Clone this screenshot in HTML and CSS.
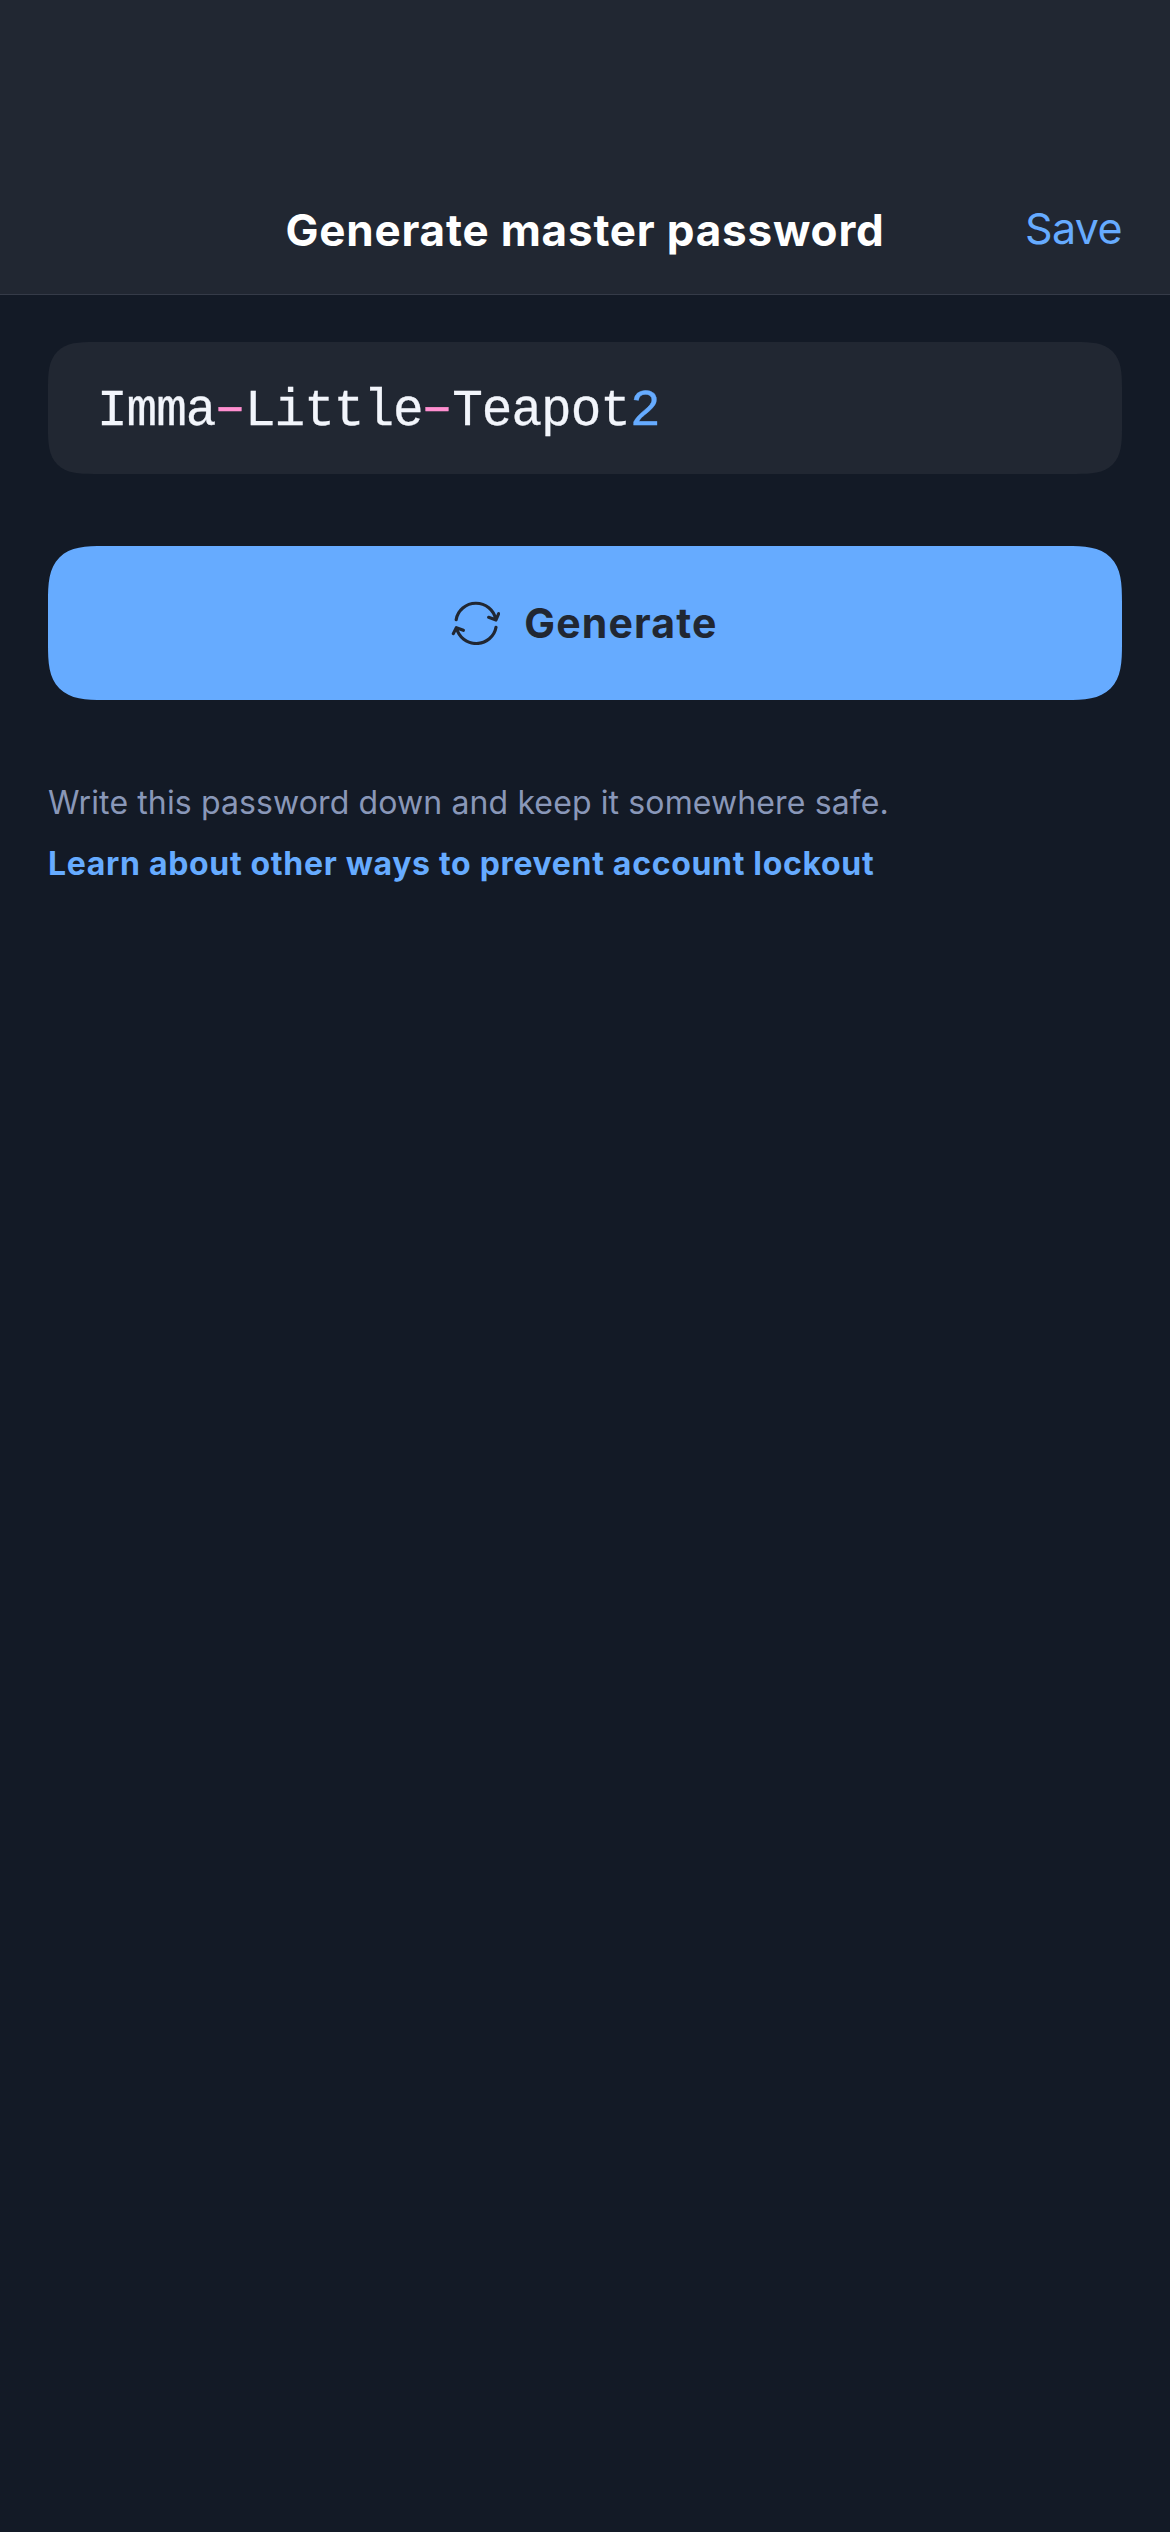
FILE: index.html
```html
<!DOCTYPE html>
<html lang="en">
<head>
<meta charset="utf-8">
<title>Generate master password</title>
<link rel="stylesheet" href="styles.css">
</head>
<body>
<header class="navbar">
  <h1 class="title">Generate master password</h1>
  <a class="save">Save</a>
</header>
<main class="content">
  <div class="field">Imma<span class="symbol">-</span>Little<span class="symbol">-</span>Teapot<span class="digit">2</span></div>
  <button class="generate">
    <svg class="icon" viewBox="0 0 150 132" fill="none" stroke="currentColor" stroke-width="9.5" stroke-linecap="round" stroke-linejoin="round">
      <path d="M18.500 56A60 58 0 0 1 137 55M146 38L138 57L116 49M10 98L19 80L40 88M20 81A60 58 0 0 0 138 79"/>
    </svg>
    <span>Generate</span>
  </button>
  <p class="hint">Write this password down and keep it somewhere safe.</p>
  <a class="learn">Learn about other ways to prevent account lockout</a>
</main>
</body>
</html>
```
FILE: styles.css
```css
* { box-sizing: border-box; }
body { margin: 0; min-height: 2532px; background: #131a26; font-family: Inter, "Liberation Sans", sans-serif; }
.navbar { height: 295px; padding: 162px 48px 0; background: #212732; border-bottom: 1px solid #353b48; display: grid; grid-template-columns: 1fr auto 1fr; }
.title { grid-column: 2; margin: 0; color: #fff; font-size: 44px; font-weight: 700; letter-spacing: 0.8px; line-height: 136px; height: 132px; white-space: nowrap; }
.save { justify-self: end; color: #66abff; font-size: 43px; letter-spacing: -0.6px; line-height: 132px; height: 132px; }
.content { padding: 47px 48px 0; display: flex; flex-direction: column; }
.field { height: 132px; padding: 0 49px; background: #212732; border-radius: 46px; corner-shape: superellipse(1.6); color: #f2f5fb; font: 51px/140px "Liberation Mono", monospace; letter-spacing: -1px; -webkit-text-stroke: 0.3px currentColor; white-space: nowrap; }
.symbol { display: inline-block; width: 14px; margin: 0 7.8px; line-height: 1; font-family: Roboto, sans-serif; letter-spacing: 0; color: #ff8fd0; transform: scaleX(1.85); }
.digit { color: #66abff; }
.generate { margin-top: 72px; height: 154px; padding: 0 2px 0 0; border: 0; border-radius: 56px; corner-shape: superellipse(1.6); background: #66abff; color: #212732; font: 700 41px/1 Inter, "Liberation Sans", sans-serif; letter-spacing: 1.15px; display: flex; align-items: center; justify-content: center; gap: 24px; }
.icon { width: 50px; height: 44px; }
.hint { margin: 72px 0 0; color: #8997b8; font-size: 32px; letter-spacing: 0.12px; line-height: 61px; white-space: nowrap; }
.learn { color: #66abff; font-size: 32px; font-weight: 700; letter-spacing: 0.68px; line-height: 61px; white-space: nowrap; }
```
